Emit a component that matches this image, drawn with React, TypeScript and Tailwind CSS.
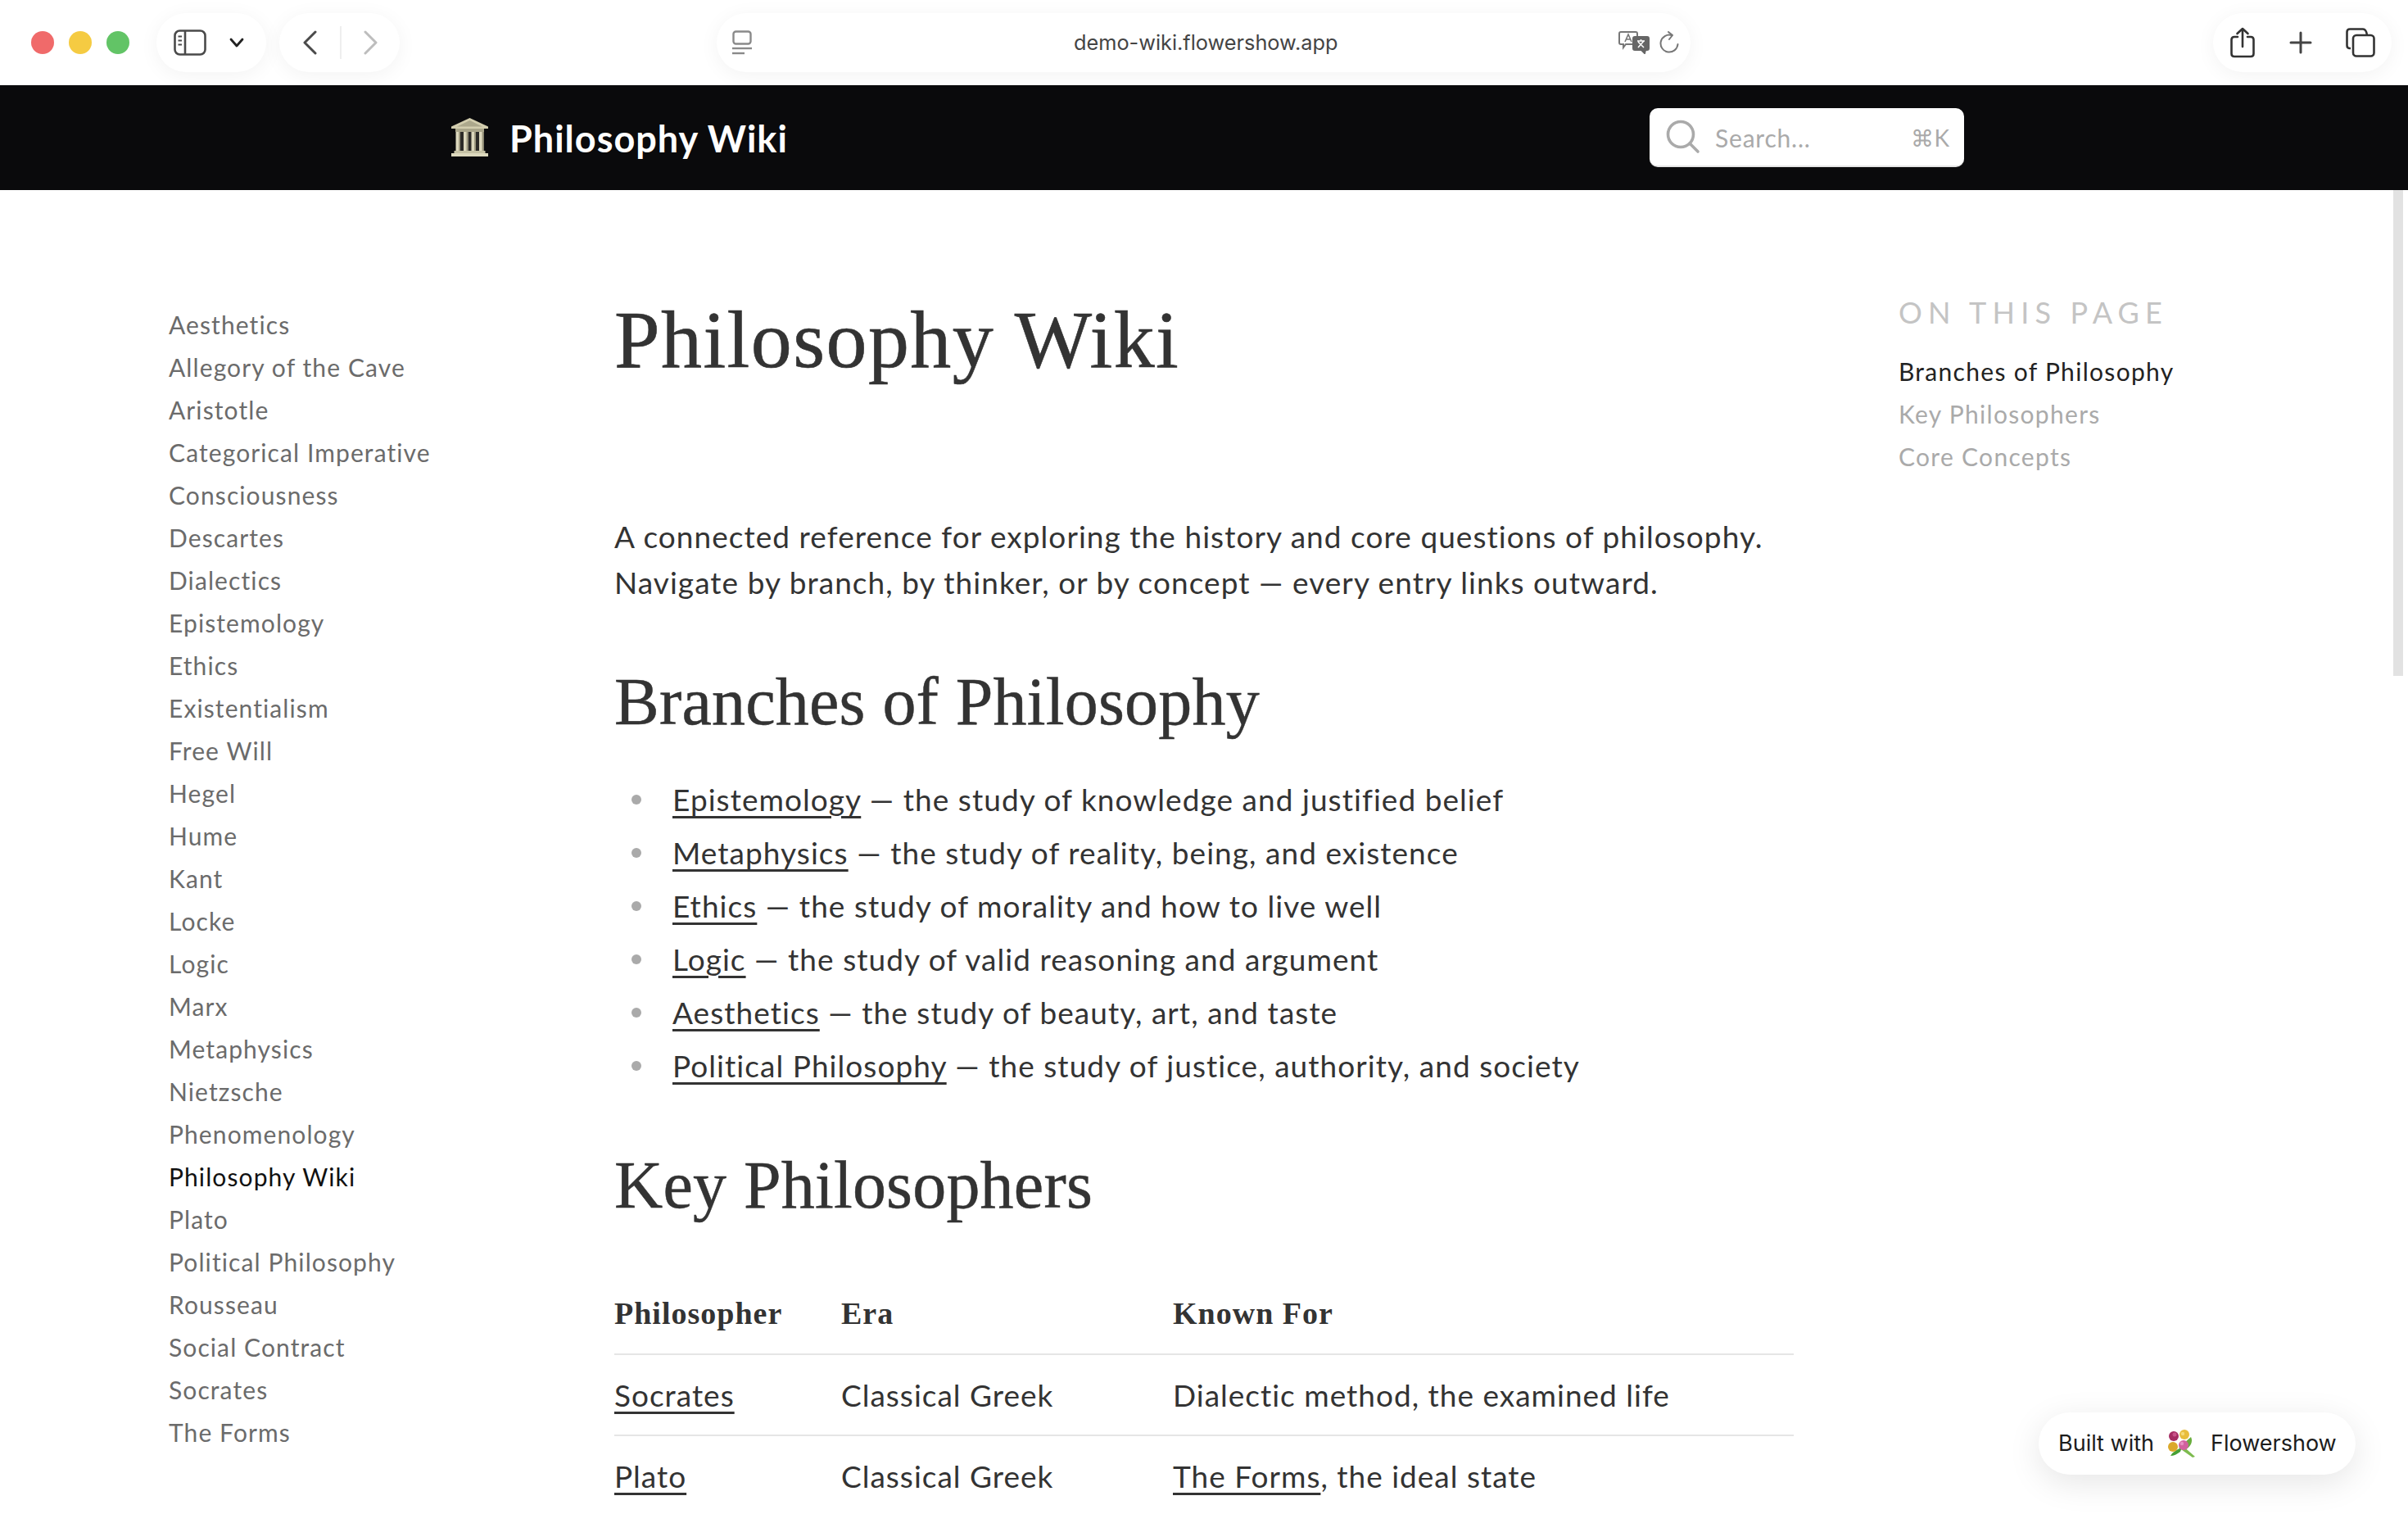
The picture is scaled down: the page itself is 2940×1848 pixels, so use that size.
import React from "react";

const pages = [
  "Aesthetics", "Allegory of the Cave", "Aristotle", "Categorical Imperative", "Consciousness",
  "Descartes", "Dialectics", "Epistemology", "Ethics", "Existentialism", "Free Will", "Hegel",
  "Hume", "Kant", "Locke", "Logic", "Marx", "Metaphysics", "Nietzsche", "Phenomenology",
  "Philosophy Wiki", "Plato", "Political Philosophy", "Rousseau", "Social Contract", "Socrates",
  "The Forms",
];

const branches = [
  ["Epistemology", "the study of knowledge and justified belief"],
  ["Metaphysics", "the study of reality, being, and existence"],
  ["Ethics", "the study of morality and how to live well"],
  ["Logic", "the study of valid reasoning and argument"],
  ["Aesthetics", "the study of beauty, art, and taste"],
  ["Political Philosophy", "the study of justice, authority, and society"],
];

function Link({ children }: { children: React.ReactNode }) {
  return <a className="underline decoration-[3px] underline-offset-[6px]">{children}</a>;
}

function TempleIcon() {
  return (
    <svg width="46" height="48" viewBox="0 0 46 48">
      <path d="M22.5 0 L45 10.5 L45 13 L0 13 L0 10.5 Z" fill="#d2cdae" />
      <path d="M22.5 3 L38 10.5 L7 10.5 Z" fill="#aca88c" />
      <rect x="5" y="13" width="35" height="4" fill="#a9a58a" />
      <rect x="6" y="17" width="33" height="23" fill="#2c2b28" />
      {[5.5, 15, 24.5, 34].map((x) => (
        <g key={x}>
          <rect x={x} y="17" width="5.5" height="23" fill="#dcd8bd" />
          <rect x={x + 3.6} y="17" width="1.9" height="23" fill="#98947b" />
        </g>
      ))}
      <rect x="3.5" y="40" width="38" height="3" fill="#c6c2a5" />
      <rect x="0" y="43" width="45" height="4" fill="#dcd8bd" />
    </svg>
  );
}

function FlowerIcon() {
  return (
    <svg width="36" height="36" viewBox="7 8 36 36">
      <path d="M24 28 L40 42 L37 43 L20 31 Z" fill="#7dbb4e" />
      <path d="M35 18 C38 24 34 30 29 33 L27 25 Z" fill="#69ad3d" />
      <path d="M10 41 C13 36 18 33 24 31 L22 36 C18 39 14 41 10 41 Z" fill="#46a035" />
      <circle cx="14" cy="17" r="6" fill="#a62c63" />
      <circle cx="15" cy="15" r="2.5" fill="#c9538a" />
      <circle cx="27" cy="15" r="6" fill="#e8bd3c" />
      <circle cx="25" cy="14" r="2.2" fill="#f4da78" />
      <circle cx="13" cy="30" r="6" fill="#dba92c" />
      <circle cx="26" cy="28" r="6" fill="#d2619f" />
      <circle cx="24" cy="26" r="2.2" fill="#e690c2" />
    </svg>
  );
}

function Toolbar() {
  return (
    <div className="h-[104px] bg-white flex items-center font-['Inter',sans-serif] relative">
      <div className="flex gap-[18px] ml-[38px] mr-[33px]">
        <div className="w-[28px] h-[28px] rounded-full bg-[#f06a6a]" />
        <div className="w-[28px] h-[28px] rounded-full bg-[#f5cb42]" />
        <div className="w-[28px] h-[28px] rounded-full bg-[#62c466]" />
      </div>
      <div className="w-[134px] h-[72px] rounded-[36px] bg-white shadow-[0_4px_24px_rgba(0,0,0,0.05)] flex items-center pl-[21px]">
        <svg width="40" height="32" viewBox="0 0 40 32" fill="none" stroke="#4a4a4a" strokeWidth="2.6">
          <rect x="1.5" y="1.5" width="37" height="29" rx="6" />
          <path d="M14 1.5 V30.5" />
          <path d="M5.5 8.5 H10 M5.5 13.5 H10 M5.5 18.5 H10" strokeWidth="2" />
        </svg>
        <svg className="ml-[28px]" width="18" height="12" viewBox="0 0 18 12" fill="none" stroke="#222" strokeWidth="2.8" strokeLinecap="round" strokeLinejoin="round">
          <path d="M2 2 L9 10 L16 2" />
        </svg>
      </div>
      <div className="w-[147px] h-[72px] ml-[16px] rounded-[36px] bg-white shadow-[0_4px_24px_rgba(0,0,0,0.05)] flex items-center pl-[29px]">
        <svg width="17" height="30" viewBox="0 0 17 30" fill="none" stroke="#4a4a4a" strokeWidth="3" strokeLinecap="round" strokeLinejoin="round">
          <path d="M15 2 L2 15 L15 28" />
        </svg>
        <div className="w-[2px] h-[40px] bg-[#eeeeee] ml-[28px]" />
        <svg className="ml-[27px]" width="17" height="30" viewBox="0 0 17 30" fill="none" stroke="#bdbdbd" strokeWidth="3" strokeLinecap="round" strokeLinejoin="round">
          <path d="M2 2 L15 15 L2 28" />
        </svg>
      </div>
      <div className="w-[1189px] h-[72px] ml-[387px] rounded-[36px] bg-white shadow-[0_4px_24px_rgba(0,0,0,0.05)] flex items-center justify-between pl-[19px] pr-[14px] relative">
        <svg width="24" height="30" viewBox="0 0 24 30" fill="none" stroke="#8a8a8a" strokeWidth="2.4">
          <rect x="1.5" y="1.5" width="21" height="15" rx="3" />
          <path d="M0 22 H24" />
          <path d="M0 28 H15" />
        </svg>
        <span className="absolute left-[436px] text-[25.3px] text-[#444]">demo-wiki.flowershow.app</span>
        <div className="flex items-center gap-[12px]">
          <svg width="38" height="28" viewBox="0 0 38 28" fill="none" stroke="#777" strokeWidth="2">
            <path d="M3 1 H21 Q23 1 23 3 V14 Q23 16 21 16 H9 L6 20 V16 H3 Q1 16 1 14 V3 Q1 1 3 1 Z" />
            <path d="M8 13 L12 4 L16 13 M9.5 10 H14.5" strokeWidth="1.6" />
            <path d="M20 7 H35 Q37 7 37 9 V21 Q37 23 35 23 H33 L32 27 L28 23 H20 Q18 23 18 21 V9 Q18 7 20 7 Z" fill="#666" stroke="#666" />
            <path d="M23 12 H32 M27.5 10 V12 M31 12 L24 20 M24 13 L31 20" stroke="#fff" strokeWidth="1.5" />
          </svg>
          <svg width="24" height="28" viewBox="0 0 24 28" fill="none" stroke="#777" strokeWidth="2" strokeLinecap="round" strokeLinejoin="round">
            <path d="M15 5 A10.5 10.5 0 1 0 22.5 16" />
            <path d="M11 1 L16 5 L12 10" />
          </svg>
        </div>
      </div>
      <div className="w-[218px] h-[72px] ml-[638px] rounded-[36px] bg-white shadow-[0_4px_24px_rgba(0,0,0,0.05)] flex items-center pl-[21px]">
        <svg width="30" height="38" viewBox="0 0 30 38" fill="none" stroke="#333" strokeWidth="2.6" strokeLinecap="round" strokeLinejoin="round">
          <path d="M9 12 H5 Q1.5 12 1.5 15.5 V32.5 Q1.5 36 5 36 H25 Q28.5 36 28.5 32.5 V15.5 Q28.5 12 25 12 H21" />
          <path d="M15 24 V2 M8.5 8 L15 2 L21.5 8" />
        </svg>
        <svg className="ml-[42px]" width="28" height="28" viewBox="0 0 28 28" fill="none" stroke="#444" strokeWidth="3" strokeLinecap="round">
          <path d="M14 2 V26 M2 14 H26" />
        </svg>
        <svg className="ml-[41px]" width="36" height="36" viewBox="0 0 36 36" fill="none" stroke="#333" strokeWidth="2.6">
          <path d="M6 25 H5 Q1.5 25 1.5 21.5 V5 Q1.5 1.5 5 1.5 H21 Q25 1.5 26 9" />
          <rect x="9" y="9" width="25.5" height="25.5" rx="4" />
        </svg>
      </div>
    </div>
  );
}

function Header() {
  return (
    <header className="h-[128px] bg-[#0a0a0c] flex items-center pl-[551px]">
      <TempleIcon />
      <span className="ml-[25px] mt-[4px] text-[45px] font-bold tracking-[1px] text-white font-['Lato',sans-serif]">Philosophy Wiki</span>
      <div className="ml-auto mr-[542px] w-[384px] h-[72px] rounded-[10px] bg-white border-b-2 border-[#e5e5e5] flex items-center pl-[20px] pr-[18px]">
        <svg width="42" height="42" viewBox="0 0 42 42" fill="none" stroke="#aaa" strokeWidth="3.6" strokeLinecap="round">
          <circle cx="18" cy="18" r="15.5" />
          <path d="M29 29 L39 39" />
        </svg>
        <span className="ml-[18px] mt-[2px] text-[30px] tracking-[0.8px] text-[#aaa] font-['Lato',sans-serif]">Search...</span>
        <span className="ml-auto mt-[2px] text-[28px] text-[#aaa] font-['Lato',sans-serif]">⌘K</span>
      </div>
    </header>
  );
}

export default function App() {
  return (
    <div className="h-[1848px] overflow-hidden bg-white text-[#333] font-['Lato',sans-serif] relative">
      <Toolbar />
      <Header />
      <div className="flex">
        <nav className="w-[750px] pl-[206px] pt-[138px] text-[30px] tracking-[1.1px] leading-[52px] text-[#6b6b6b]">
          {pages.map((p) => (
            <div key={p} className={p === "Philosophy Wiki" ? "text-[#111]" : ""}>{p}</div>
          ))}
        </nav>
        <main className="w-[1440px] pt-[127px]">
          <h1 className="font-['Liberation_Serif',serif] text-[100px] tracking-[1.4px] leading-[112px] text-[#333] [-webkit-text-stroke:0.6px_#333]">Philosophy Wiki</h1>
          <p className="mt-[156px] text-[37px] tracking-[1.05px] leading-[56px]">
            A connected reference for exploring the history and core questions of philosophy.
            <br />
            Navigate by branch, by thinker, or by concept — every entry links outward.
          </p>
          <h2 className="mt-[72px] font-['Liberation_Serif',serif] text-[82px] tracking-[0.2px] leading-[92px] [-webkit-text-stroke:0.5px_#333]">Branches of Philosophy</h2>
          <ul className="mt-[40px] text-[37px] tracking-[1.05px] leading-[65px] pl-[71px]">
            {branches.map(([name, desc]) => (
              <li key={name} className="relative">
                <span className="absolute left-[-50px] top-[27px] w-[12px] h-[12px] rounded-full bg-[#aaa]" />
                <Link>{name}</Link> — {desc}
              </li>
            ))}
          </ul>
          <h2 className="mt-[68px] font-['Liberation_Serif',serif] text-[82px] tracking-[0.2px] leading-[92px] [-webkit-text-stroke:0.5px_#333]">Key Philosophers</h2>
          <table className="mt-[62px] w-full table-fixed text-[37px] tracking-[1px] text-left">
            <colgroup>
              <col className="w-[277px]" />
              <col className="w-[405px]" />
              <col />
            </colgroup>
            <thead className="font-['Liberation_Serif',serif] font-bold text-[38px]">
              <tr className="h-[98px] border-b-2 border-[#e5e5e5]">
                <th>Philosopher</th>
                <th>Era</th>
                <th>Known For</th>
              </tr>
            </thead>
            <tbody>
              <tr className="h-[99px] border-b-2 border-[#e5e5e5]">
                <td><Link>Socrates</Link></td>
                <td>Classical Greek</td>
                <td>Dialectic method, the examined life</td>
              </tr>
              <tr className="h-[99px]">
                <td><Link>Plato</Link></td>
                <td>Classical Greek</td>
                <td><Link>The Forms</Link>, the ideal state</td>
              </tr>
            </tbody>
          </table>
        </main>
        <aside className="ml-[128px] pt-[123px]">
          <div className="text-[36px] tracking-[0.2em] text-[#c4c4c4] leading-[52px]">ON THIS PAGE</div>
          <div className="mt-[20px] text-[30px] tracking-[1.3px] leading-[52px] text-[#aaa]">
            <div className="text-[#222]">Branches of Philosophy</div>
            <div>Key Philosophers</div>
            <div>Core Concepts</div>
          </div>
        </aside>
      </div>
      <div className="absolute right-[6px] top-[232px] w-[12px] h-[593px] bg-[#e2e2e2]" />
      <div className="absolute left-[2489px] top-[1724px] w-[387px] h-[76px] rounded-[38px] bg-white shadow-[0_10px_40px_rgba(0,0,0,0.1)] flex items-center pl-[24px] text-[27px] text-[#1c1c1c] font-['Inter',sans-serif]">
        <span>Built with</span>
        <span className="ml-[17px]"><FlowerIcon /></span>
        <span className="ml-[16px]">Flowershow</span>
      </div>
    </div>
  );
}
